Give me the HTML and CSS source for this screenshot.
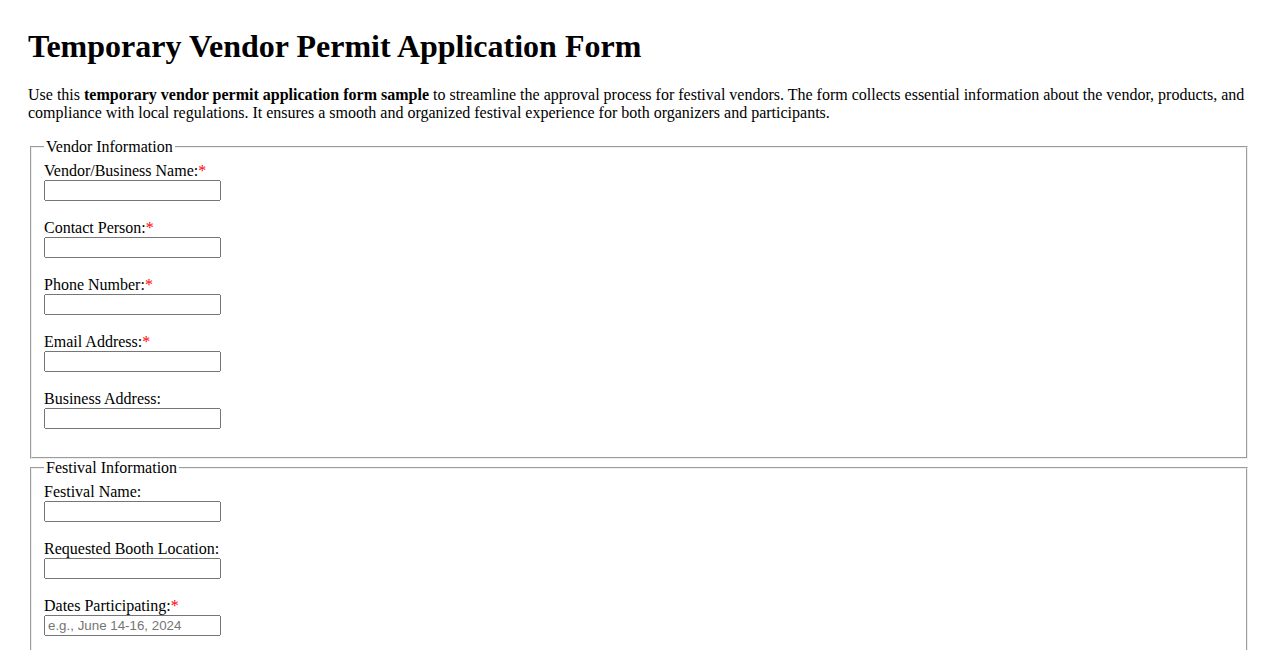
FILE: index.html
```html
<!DOCTYPE html>
<html lang="en">
<head>
    <meta charset="UTF-8">
    <meta name="viewport" content="width=device-width, initial-scale=1.0">
    <title>Temporary Vendor Permit Application Form</title>
    <link rel="stylesheet" href="styles.css">
</head>
<body>
    <h1>Temporary Vendor Permit Application Form</h1>
    <p>Use this <strong>temporary vendor permit application form sample</strong> to streamline the approval process for festival vendors. The form collects essential information about the vendor, products, and compliance with local regulations. It ensures a smooth and organized festival experience for both organizers and participants.</p>
    <form id="permitForm">
        <fieldset>
            <legend>Vendor Information</legend>
            <div class="field">
                <label for="vendorName">Vendor/Business Name:<span class="required">*</span></label>
                <input type="text" id="vendorName" name="vendorName" required>
            </div>
            <div class="field">
                <label for="contactPerson">Contact Person:<span class="required">*</span></label>
                <input type="text" id="contactPerson" name="contactPerson" required>
            </div>
            <div class="field">
                <label for="phone">Phone Number:<span class="required">*</span></label>
                <input type="tel" id="phone" name="phone" required>
            </div>
            <div class="field">
                <label for="email">Email Address:<span class="required">*</span></label>
                <input type="email" id="email" name="email" required>
            </div>
            <div class="field">
                <label for="businessAddress">Business Address:</label>
                <input type="text" id="businessAddress" name="businessAddress">
            </div>
        </fieldset>
        <fieldset>
            <legend>Festival Information</legend>
            <div class="field">
                <label for="festivalName">Festival Name:</label>
                <input type="text" id="festivalName" name="festivalName">
            </div>
            <div class="field">
                <label for="boothLocation">Requested Booth Location:</label>
                <input type="text" id="boothLocation" name="boothLocation">
            </div>
            <div class="field">
                <label for="dates">Dates Participating:<span class="required">*</span></label>
                <input type="text" id="dates" name="dates" placeholder="e.g., June 14-16, 2024" required>
            </div>
            <div class="field">
                <label for="products">Products to be Sold:<span class="required">*</span></label>
                <input type="text" id="products" name="products" required>
            </div>
        </fieldset>
    </form>
</body>
</html>
```

FILE: styles.css
```css
body {
    font-family: "Liberation Serif", "Times New Roman", serif;
    font-size: 16px;
    margin: 28px;
    color: #000;
}
h1 {
    font-size: 32px;
    margin: 0 0 21px;
}
p {
    margin: 0 0 16px;
}
fieldset {
    margin: 0 2px;
}
.field {
    margin-bottom: 18.1px;
}
.field label {
    display: block;
}
.field input {
    display: block;
    box-sizing: border-box;
    width: 177px;
    height: 21px;
    font-family: "Liberation Sans", Arial, sans-serif;
    font-size: 13.33px;
}
.required {
    color: red;
}
```
